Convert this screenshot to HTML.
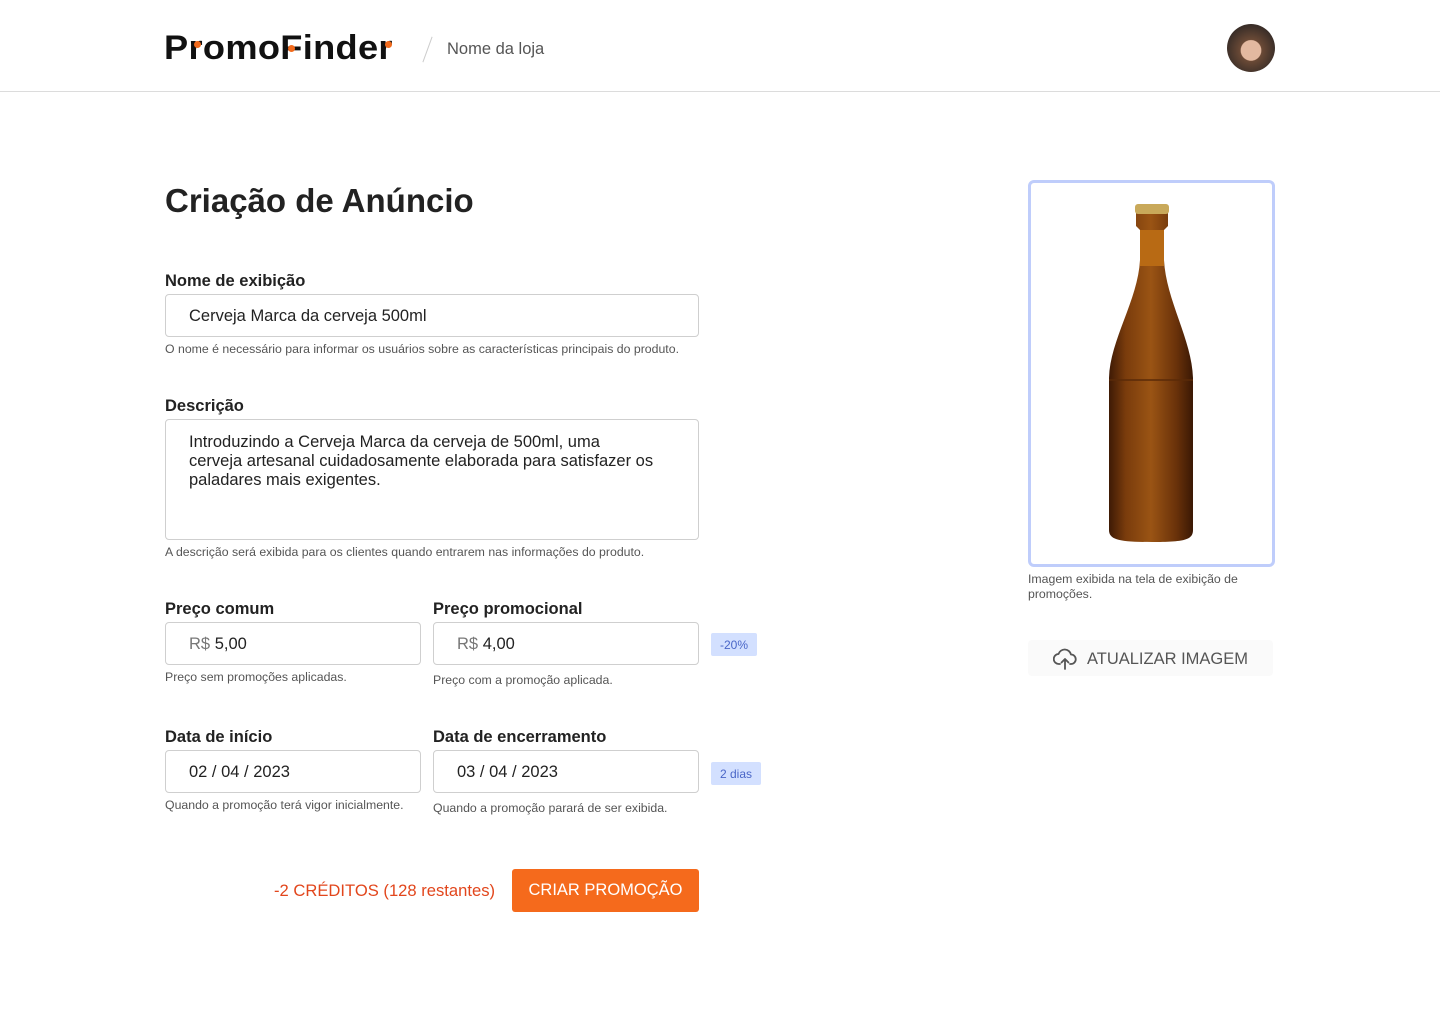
<!DOCTYPE html>
<html><head><meta charset="utf-8"><style>
*{box-sizing:border-box;margin:0;padding:0}
body{width:1440px;height:1024px;background:#fff;font-family:"Liberation Sans",sans-serif;color:#222;position:relative;overflow:hidden}
.abs{position:absolute}
.hdr{position:absolute;left:0;top:0;width:1440px;height:92px;border-bottom:1px solid #dcdcdc}
.logo{left:164px;top:29px;font-size:34px;font-weight:bold;color:#111;letter-spacing:0.3px;transform:scaleX(1.065);transform-origin:left}
.dot{position:absolute;width:7px;height:7px;border-radius:50%;background:#f26b1d}
.lbl{font-size:16.5px;font-weight:bold;color:#222}
.inp{position:absolute;border:1px solid #cfcfcf;border-radius:4px;background:#fff;font-size:16.5px;color:#222;padding-left:23px;display:flex;align-items:center;padding-top:2px}
.hint{font-size:12.3px;color:#555}
.badge{position:absolute;background:#d3e0ff;color:#4a66c8;font-size:12px;display:flex;align-items:center;justify-content:center;border-radius:2px}
.g{color:#777}
</style></head><body>
<div class="hdr"></div>
<div class="abs logo">PromoFinder</div>
<div class="dot" style="left:194px;top:41px"></div>
<div class="dot" style="left:288px;top:45px"></div>
<div class="dot" style="left:385px;top:41px"></div>
<div class="abs" style="left:427px;top:36px;width:1px;height:27px;background:#ccc;transform:rotate(20deg)"></div>
<div class="abs" style="left:447px;top:40px;font-size:16.5px;color:#555">Nome da loja</div>
<div class="abs" style="left:1227px;top:24px;width:48px;height:48px;border-radius:50%;background:radial-gradient(circle at 50% 55%,#e3b9a0 0 28%,#6b4a36 30%,#3a2e28 70%)"></div>

<div class="abs" style="left:165px;top:182px;font-size:33px;font-weight:bold;color:#222">Criação de Anúncio</div>

<div class="abs lbl" style="left:165px;top:272px">Nome de exibição</div>
<div class="inp" style="left:165px;top:294px;width:534px;height:43px">Cerveja Marca da cerveja 500ml</div>
<div class="abs hint" style="left:165px;top:342px">O nome é necessário para informar os usuários sobre as características principais do produto.</div>

<div class="abs lbl" style="left:165px;top:397px">Descrição</div>
<div class="inp" style="left:165px;top:419px;width:534px;height:121px;align-items:flex-start;padding-top:13px;line-height:19px;padding-right:34px">Introduzindo a Cerveja Marca da cerveja de 500ml, uma<br>cerveja artesanal cuidadosamente elaborada para satisfazer os paladares mais exigentes.</div>
<div class="abs hint" style="left:165px;top:545px">A descrição será exibida para os clientes quando entrarem nas informações do produto.</div>

<div class="abs lbl" style="left:165px;top:600px">Preço comum</div>
<div class="inp" style="left:165px;top:622px;width:256px;height:43px"><span class="g">R$&nbsp;</span>5,00</div>
<div class="abs hint" style="left:165px;top:670px">Preço sem promoções aplicadas.</div>
<div class="abs lbl" style="left:433px;top:600px">Preço promocional</div>
<div class="inp" style="left:433px;top:622px;width:266px;height:43px"><span class="g">R$&nbsp;</span>4,00</div>
<div class="abs hint" style="left:433px;top:673px">Preço com a promoção aplicada.</div>
<div class="badge" style="left:711px;top:633px;width:46px;height:23px">-20%</div>

<div class="abs lbl" style="left:165px;top:728px">Data de início</div>
<div class="inp" style="left:165px;top:750px;width:256px;height:43px">02 / 04 / 2023</div>
<div class="abs hint" style="left:165px;top:798px">Quando a promoção terá vigor inicialmente.</div>
<div class="abs lbl" style="left:433px;top:728px">Data de encerramento</div>
<div class="inp" style="left:433px;top:750px;width:266px;height:43px">03 / 04 / 2023</div>
<div class="abs hint" style="left:433px;top:801px">Quando a promoção parará de ser exibida.</div>
<div class="badge" style="left:711px;top:762px;width:50px;height:23px">2 dias</div>

<div class="abs" style="left:274px;top:881px;font-size:16.6px;color:#e2461c">-2 CRÉDITOS (128 restantes)</div>
<div class="abs" style="left:512px;top:869px;width:187px;height:43px;background:#f56a1c;border-radius:3px;color:#fff;font-size:16.5px;display:flex;align-items:center;justify-content:center">CRIAR PROMOÇÃO</div>

<div class="abs" style="left:1028px;top:180px;width:247px;height:387px;border:3px solid #bfcdfb;border-radius:6px"></div>
<svg class="abs" style="left:1100px;top:200px" width="104" height="346" viewBox="0 0 104 346">
<defs><linearGradient id="b" x1="0" x2="1"><stop offset="0" stop-color="#3e1a05"/><stop offset=".2" stop-color="#7a3c0c"/><stop offset=".5" stop-color="#9a5414"/><stop offset=".8" stop-color="#6a320a"/><stop offset="1" stop-color="#3a1804"/></linearGradient></defs>
<path d="M36 12 L68 12 L68 26 L64 30 L64 60 C66 100 92 140 93 178 L93 330 C93 340 84 342 52 342 C20 342 9 340 9 330 L9 178 C10 140 38 100 40 60 L40 30 L36 26 Z" fill="url(#b)"/>
<rect x="40" y="30" width="24" height="36" fill="#b86a14"/>
<rect x="35" y="4" width="34" height="10" rx="3" fill="#c9a95a"/>
<line x1="9" y1="180" x2="93" y2="180" stroke="#5a2a08" stroke-width="1.5"/>
</svg>
<div class="abs" style="left:1028px;top:572px;width:240px;font-size:12.3px;color:#555;line-height:15px">Imagem exibida na tela de exibição de promoções.</div>
<div class="abs" style="left:1028px;top:640px;width:245px;height:36px;background:#fafafa;border-radius:4px;display:flex;align-items:center;justify-content:center;font-size:16.5px;color:#555;gap:10px;padding-top:2px">
<svg width="24" height="22" viewBox="0 0 24 22" fill="none" stroke="#555" stroke-width="1.8" stroke-linecap="round" stroke-linejoin="round"><path d="M7 16H6a5 5 0 0 1-.5-10A6.5 6.5 0 0 1 18 6.5a4.5 4.5 0 0 1 0 9.5h-1"/><path d="M12 21V11M8.5 14.5L12 11l3.5 3.5"/></svg>ATUALIZAR IMAGEM</div>
</body></html>
